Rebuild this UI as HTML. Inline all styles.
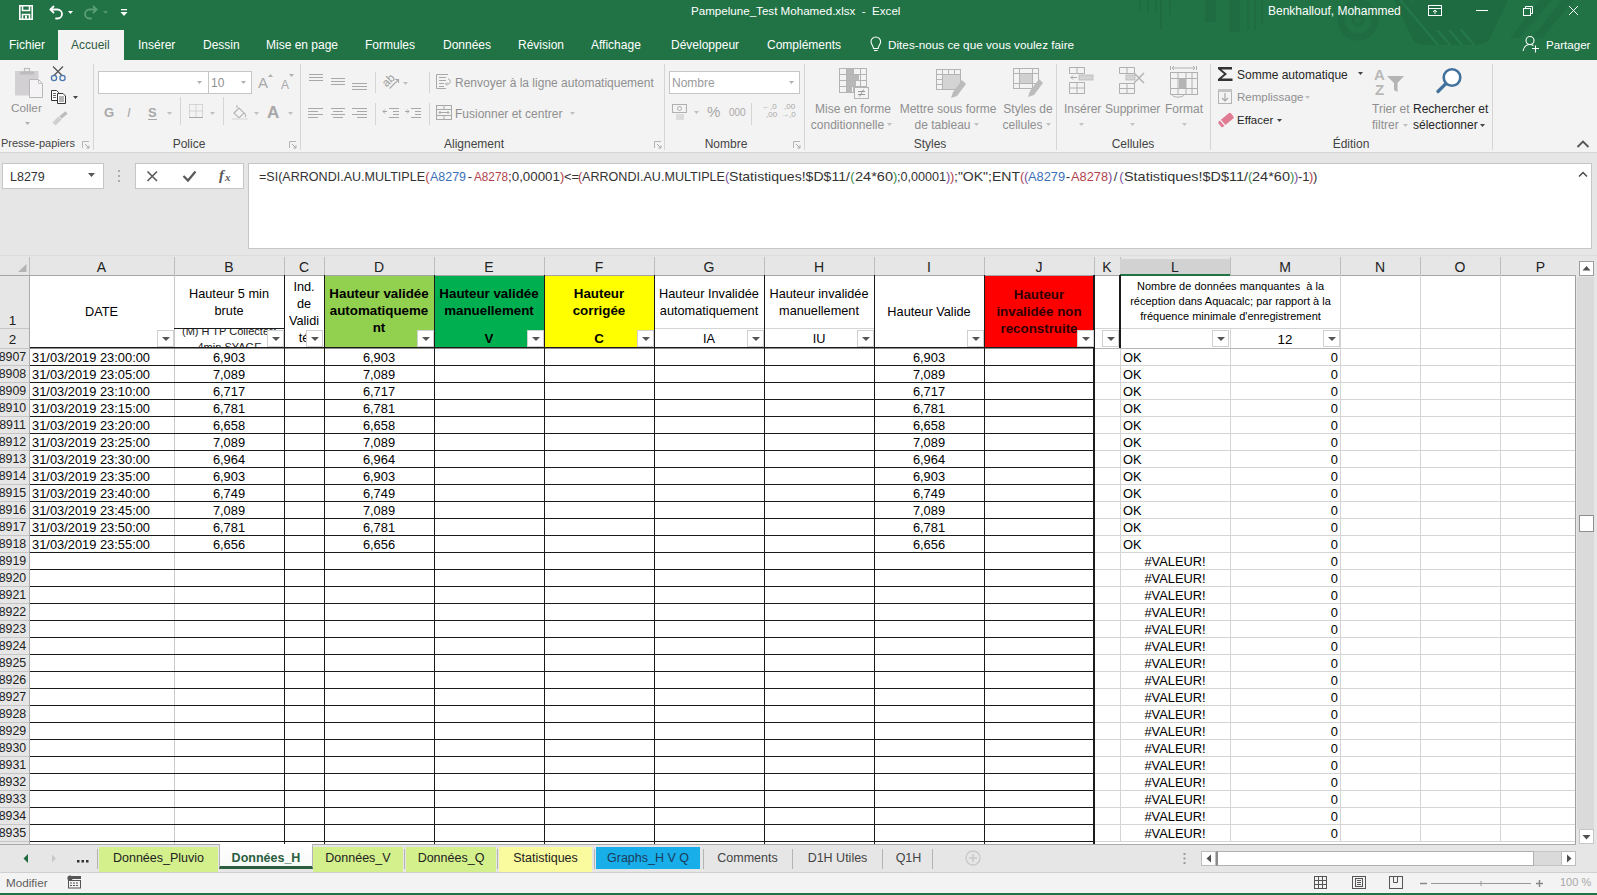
<!DOCTYPE html><html><head><meta charset="utf-8"><style>
*{margin:0;padding:0;box-sizing:border-box}
html,body{width:1597px;height:895px;overflow:hidden;background:#e6e6e6;font-family:"Liberation Sans",sans-serif;}
.ab{position:absolute;white-space:nowrap}
.t{position:absolute;white-space:nowrap;line-height:1}
</style></head><body>
<div class="ab" style="left:0;top:0;width:1597px;height:60px;background:#217346"></div>
<div class="ab" style="left:58px;top:30px;width:66px;height:31px;background:#f3f3f3"></div>
<div class="ab" style="left:0;top:60px;width:1597px;height:92px;background:#f3f3f3"></div>
<div class="ab" style="left:0;top:153px;width:1597px;height:103px;background:#e6e6e6"></div>
<svg class="ab" style="left:1100px;top:0" width="497" height="60">
<g fill="#1f6c42">
<rect x="39" y="0" width="2" height="10"/>
<rect x="47" y="0" width="2" height="14"/>
<rect x="55" y="0" width="2" height="12"/>
<rect x="60" y="0" width="2" height="30"/>
<rect x="69" y="0" width="2" height="15"/>
<rect x="105" y="0" width="11" height="22"/>
<rect x="129" y="0" width="11" height="32"/>
<rect x="147" y="0" width="2" height="30"/>
<rect x="154" y="0" width="2" height="30"/>
<rect x="161" y="0" width="2" height="24"/>
</g>
<circle cx="258" cy="20" r="17" fill="none" stroke="#1f6c42" stroke-width="7"/>
<circle cx="258" cy="20" r="5" fill="none" stroke="#1f6c42" stroke-width="3"/>
<path d="M294 0 L408 0 L390 38 Q386 45 376 45 L326 45 Q316 45 312 38 Z" fill="#1e6b41"/>
<path d="M300 0 L338 45 M312 0 L350 45 M324 0 L362 45 M336 0 L374 45" stroke="#23774a" stroke-width="2.5"/>
<path d="M312 0 L372 0 L360 30 L330 30 Z" fill="#1e6b41"/>
<path d="M440 0 L452 0 L420 38 L410 38 Z M462 0 L474 0 L442 38 L432 38 Z" fill="#1f6c42"/>
</svg>
<svg class="ab" style="left:18px;top:4px" width="112" height="18">
<g fill="none" stroke="#fff" stroke-width="1.6">
<path d="M1.8 1.8 H14.2 V15.2 H1.8 Z"/>
<path d="M4.5 2 V6.5 H11.5 V2"/>
<path d="M4.5 15 V10.5 H11.5 V15"/>
</g>
<rect x="7" y="11.5" width="2" height="3" fill="#fff"/>
<g fill="none" stroke="#fff" stroke-width="1.8" stroke-linecap="round">
<path d="M33 5.5 H39.5 A4.5 4.5 0 0 1 39.5 14.5 H38"/>
<path d="M35.5 2.5 L32.5 5.5 L35.5 8.5"/>
</g>
<path d="M50 7 L55 7 L52.5 10 Z" fill="#fff"/>
<g fill="none" stroke="#5a9f78" stroke-width="1.8" stroke-linecap="round">
<path d="M78 5.5 H71.5 A4.5 4.5 0 0 0 71.5 14.5 H73"/>
<path d="M75.5 2.5 L78.5 5.5 L75.5 8.5"/>
</g>
<path d="M85 7 L90 7 L87.5 10 Z" fill="#4f9470"/>
<rect x="103" y="5" width="6" height="1.3" fill="#fff"/>
<path d="M102.5 8 L109.5 8 L106 12 Z" fill="#fff"/>
</svg>
<svg class="ab" style="left:1420px;top:0" width="177" height="24">
<g fill="none" stroke="#fff" stroke-width="1">
<rect x="8.5" y="5.5" width="13" height="10"/>
<path d="M8.5 8.5 H21.5"/>
<path d="M15 14 V10 M13 12 L15 10 L17 12"/>
<path d="M56 10.5 H68"/>
<rect x="103.5" y="8.5" width="7" height="7"/>
<path d="M105.5 8.5 V6.5 H112.5 V13.5 H110.5"/>
<path d="M149 6 L158 15 M158 6 L149 15"/>
</g>
</svg>
<svg class="ab" style="left:1522px;top:35px" width="18" height="18">
<g fill="none" stroke="#fff" stroke-width="1.1">
<circle cx="8" cy="5.5" r="4"/>
<path d="M1 16 C2 11 5 9.5 8 9.5 C9.5 9.5 10.5 10 11.5 10.5"/>
<path d="M13.5 10.5 V17.5 M10 13.5 H17"/>
</g>
</svg>
<svg class="ab" style="left:869px;top:36px" width="14" height="18">
<g fill="none" stroke="#fff" stroke-width="1.1">
<path d="M4.5 12.5 C4.5 10 2 8.5 2 5.8 A4.8 4.8 0 0 1 11.6 5.8 C11.6 8.5 9.1 10 9.1 12.5 Z"/>
<path d="M5 14.5 H8.6"/>
</g>
</svg>
<div class="t" style="left:691px;top:5px;font-size:11.6px;color:#fff;">Pampelune_Test Mohamed.xlsx&nbsp; -&nbsp; Excel</div>
<div class="t" style="left:1268px;top:5px;font-size:12px;color:#fff;">Benkhallouf, Mohammed</div>
<div class="t" style="left:9px;top:39px;font-size:12px;color:#fff;">Fichier</div>
<div class="t" style="left:138px;top:39px;font-size:12px;color:#fff;">Insérer</div>
<div class="t" style="left:203px;top:39px;font-size:12px;color:#fff;">Dessin</div>
<div class="t" style="left:266px;top:39px;font-size:12px;color:#fff;">Mise en page</div>
<div class="t" style="left:365px;top:39px;font-size:12px;color:#fff;">Formules</div>
<div class="t" style="left:443px;top:39px;font-size:12px;color:#fff;">Données</div>
<div class="t" style="left:518px;top:39px;font-size:12px;color:#fff;">Révision</div>
<div class="t" style="left:591px;top:39px;font-size:12px;color:#fff;">Affichage</div>
<div class="t" style="left:671px;top:39px;font-size:12px;color:#fff;">Développeur</div>
<div class="t" style="left:767px;top:39px;font-size:12px;color:#fff;">Compléments</div>
<div class="t" style="left:1546px;top:39px;font-size:11.6px;color:#fff;">Partager</div>
<div class="t" style="left:888px;top:39px;font-size:11.75px;color:#fff;">Dites-nous ce que vous voulez faire</div>
<div class="t" style="left:71px;top:39px;font-size:12px;color:#2d5a41;">Accueil</div>
<div class="ab" style="left:93px;top:64px;width:1px;height:86px;background:#d5d5d5"></div>
<div class="ab" style="left:300px;top:64px;width:1px;height:86px;background:#d5d5d5"></div>
<div class="ab" style="left:664px;top:64px;width:1px;height:86px;background:#d5d5d5"></div>
<div class="ab" style="left:804px;top:64px;width:1px;height:86px;background:#d5d5d5"></div>
<div class="ab" style="left:1056px;top:64px;width:1px;height:86px;background:#d5d5d5"></div>
<div class="ab" style="left:1210px;top:64px;width:1px;height:86px;background:#d5d5d5"></div>
<div class="ab" style="left:1492px;top:64px;width:1px;height:86px;background:#d5d5d5"></div>
<svg class="ab" style="left:10px;top:64px" width="80" height="70">
<rect x="5" y="7" width="23.5" height="24.5" fill="#d3d0d3"/>
<rect x="10" y="7.5" width="14" height="3" fill="#bdbbbd"/>
<rect x="14.5" y="4.5" width="5" height="3.5" fill="none" stroke="#bdbbbd" stroke-width="1.2"/>
<path d="M19.5 15.5 H28.5 L32.5 19.5 V33.5 H19.5 Z" fill="#f6f3f6" stroke="#b8b8b8"/>
<path d="M28.5 15.5 V19.5 H32.5" fill="none" stroke="#c4c4c4"/>
<g fill="none" stroke="#555" stroke-width="1.3"><path d="M43 2.5 L52.5 12 M53 2.5 L43.5 12"/></g>
<g fill="none" stroke="#4a78ae" stroke-width="1.3"><circle cx="44" cy="14" r="2.6"/><circle cx="52.5" cy="14" r="2.6"/></g>
<g fill="#fff" stroke="#333" stroke-width="1"><path d="M41.5 36.5 V26.5 H46.5 L48.5 28.5 V36.5 Z"/><path d="M47.5 39.5 V29.5 H53 L55.5 32 V39.5 Z"/></g>
<path d="M43 29.5 H46 M43 31.5 H46 M43 33.5 H46 M49 33 H54 M49 35 H54 M49 37 H54" stroke="#444" stroke-width="0.8"/>
<path d="M63 32 L68 32 L65.5 35 Z" fill="#444"/>
<path d="M44 60 L50 54" stroke="#cfcfcf" stroke-width="4.5"/>
<path d="M50.5 53.5 L56.5 48.5" stroke="#bdbdbd" stroke-width="3.5"/>
</svg>
<div class="t" style="left:11px;top:103px;font-size:11.8px;color:#8f8f8f;">Coller</div>
<svg class="ab" style="left:25px;top:122px" width="6" height="4"><path d="M0 0 L5 0 L2.5 3 Z" fill="#b0b0b0"/></svg>
<div class="t" style="left:1px;top:138px;font-size:11px;color:#444444;">Presse-papiers</div>
<svg class="ab" style="left:82px;top:141px" width="8" height="8"><path d="M0.5 7 V0.5 H7" fill="none" stroke="#b4b4b4"/><path d="M3 3 L7 7 M7 4.5 V7 H4.5" fill="none" stroke="#a8a8a8"/></svg>
<div class="ab" style="left:98px;top:71px;width:154px;height:23px;background:#fff;border:1px solid #c6c6c6"></div>
<div class="ab" style="left:208px;top:72px;width:1px;height:21px;background:#c6c6c6"></div>
<svg class="ab" style="left:197px;top:81px" width="6" height="4"><path d="M0 0 L5 0 L2.5 3 Z" fill="#b0b0b0"/></svg>
<svg class="ab" style="left:241px;top:81px" width="6" height="4"><path d="M0 0 L5 0 L2.5 3 Z" fill="#b0b0b0"/></svg>
<div class="t" style="left:211px;top:77px;font-size:12px;color:#8f8f8f;">10</div>
<div class="t" style="left:258px;top:75px;font-size:15px;color:#a8a8a8;">A</div>
<svg class="ab" style="left:268px;top:74px" width="6" height="4"><path d="M0 3 L5 3 L2.5 0 Z" fill="#b0b0b0"/></svg>
<div class="t" style="left:281px;top:79px;font-size:12px;color:#a8a8a8;">A</div>
<svg class="ab" style="left:289px;top:74px" width="6" height="4"><path d="M0 0 L5 0 L2.5 3 Z" fill="#b0b0b0"/></svg>
<div class="t" style="left:104px;top:106px;font-size:13px;color:#a8a8a8;font-weight:bold">G</div>
<div class="t" style="left:127px;top:106px;font-size:13px;color:#a8a8a8;font-style:italic;font-family:"Liberation Serif",serif;font-weight:bold">I</div>
<div class="t" style="left:148px;top:106px;font-size:13px;color:#a8a8a8;font-weight:bold">S</div>
<div class="ab" style="left:148px;top:119px;width:9px;height:1px;background:#a8a8a8"></div>
<svg class="ab" style="left:167px;top:112px" width="6" height="4"><path d="M0 0 L5 0 L2.5 3 Z" fill="#c0c0c0"/></svg>
<svg class="ab" style="left:210px;top:112px" width="6" height="4"><path d="M0 0 L5 0 L2.5 3 Z" fill="#c0c0c0"/></svg>
<svg class="ab" style="left:254px;top:112px" width="6" height="4"><path d="M0 0 L5 0 L2.5 3 Z" fill="#c0c0c0"/></svg>
<svg class="ab" style="left:288px;top:112px" width="6" height="4"><path d="M0 0 L5 0 L2.5 3 Z" fill="#c0c0c0"/></svg>
<div class="ab" style="left:180px;top:97px;width:1px;height:28px;background:#d5d5d5"></div>
<div class="ab" style="left:223px;top:97px;width:1px;height:28px;background:#d5d5d5"></div>
<svg class="ab" style="left:188px;top:103px" width="16" height="16"><g fill="none" stroke="#b8b8b8" stroke-width="1" stroke-dasharray="1 1"><rect x="1.5" y="1.5" width="13" height="13"/><path d="M8 1.5 V14.5 M1.5 8 H14.5"/></g><path d="M1 14.5 H15" stroke="#a8a8a8"/></svg>
<svg class="ab" style="left:231px;top:104px" width="18" height="16"><g fill="none" stroke="#b4b4b4" stroke-width="1.1"><path d="M3 9 L8 4 L13 9 L8 14 Z"/><path d="M6 4 V1"/><path d="M13 9 C15 10 15 12 14 13"/></g><rect x="1" y="14" width="16" height="2" fill="#e4e4e4"/></svg>
<div class="t" style="left:267px;top:104px;font-size:17px;color:#a8a8a8;font-weight:bold">A</div>
<div class="t" style="left:89px;top:138px;width:200px;text-align:center;font-size:12px;color:#444444">Police</div>
<svg class="ab" style="left:289px;top:141px" width="8" height="8"><path d="M0.5 7 V0.5 H7" fill="none" stroke="#b4b4b4"/><path d="M3 3 L7 7 M7 4.5 V7 H4.5" fill="none" stroke="#a8a8a8"/></svg>
<svg class="ab" style="left:300px;top:60px" width="370" height="70"><rect x="9" y="14" width="14" height="1" fill="#a8a8a8"/><rect x="9" y="17" width="14" height="1" fill="#a8a8a8"/><rect x="9" y="20" width="14" height="1" fill="#a8a8a8"/><rect x="31" y="18" width="14" height="1" fill="#a8a8a8"/><rect x="31" y="21" width="14" height="1" fill="#a8a8a8"/><rect x="31" y="24" width="14" height="1" fill="#a8a8a8"/><rect x="52" y="23" width="15" height="1" fill="#a8a8a8"/><rect x="52" y="26" width="15" height="1" fill="#a8a8a8"/><rect x="52" y="29" width="15" height="1" fill="#a8a8a8"/><rect x="8" y="48" width="15" height="1" fill="#a8a8a8"/><rect x="8" y="51" width="10" height="1" fill="#a8a8a8"/><rect x="8" y="54" width="15" height="1" fill="#a8a8a8"/><rect x="8" y="57" width="10" height="1" fill="#a8a8a8"/><rect x="31" y="48" width="14" height="1" fill="#a8a8a8"/><rect x="33" y="51" width="10" height="1" fill="#a8a8a8"/><rect x="31" y="54" width="14" height="1" fill="#a8a8a8"/><rect x="33" y="57" width="10" height="1" fill="#a8a8a8"/><rect x="52" y="48" width="15" height="1" fill="#a8a8a8"/><rect x="57" y="51" width="10" height="1" fill="#a8a8a8"/><rect x="52" y="54" width="15" height="1" fill="#a8a8a8"/><rect x="57" y="57" width="10" height="1" fill="#a8a8a8"/><rect x="89" y="48" width="10" height="1" fill="#a8a8a8"/><rect x="93" y="51" width="6" height="1" fill="#a8a8a8"/><rect x="93" y="54" width="6" height="1" fill="#a8a8a8"/><rect x="89" y="57" width="10" height="1" fill="#a8a8a8"/><path d="M83 51.5 L87 51.5 M83 51.5 L85 49.5 M83 51.5 L85 53.5" stroke="#a8a8a8" fill="none"/><rect x="111" y="48" width="10" height="1" fill="#a8a8a8"/><rect x="115" y="51" width="6" height="1" fill="#a8a8a8"/><rect x="115" y="54" width="6" height="1" fill="#a8a8a8"/><rect x="111" y="57" width="10" height="1" fill="#a8a8a8"/><path d="M105 51.5 L109 51.5 M109 51.5 L107 49.5 M109 51.5 L107 53.5" stroke="#a8a8a8" fill="none"/><text x="86.5" y="27.5" font-size="11.5" fill="#9a9a9a" transform="rotate(-45 86.5 27.5)" font-family="Liberation Sans">ab</text><path d="M89.5 28.5 L98 20 M95 19.5 H98.5 V23" stroke="#a8a8a8" stroke-width="1.1" fill="none"/><path d="M103 22 L108 22 L105.5 25 Z" fill="#c0c0c0"/><g fill="none" stroke="#a8a8a8"><path d="M136.5 14.5 H148 M136.5 14.5 V28.5 H146"/><path d="M139 17.5 H146 M139 20.5 H146 M139 23.5 H144 M139 26.5 H144"/><path d="M148 19 C151 19 151 24 148 24 H146 M147 22.5 L145.5 24 L147 25.5"/></g><g fill="none" stroke="#a8a8a8"><rect x="136.5" y="45.5" width="15" height="14"/><path d="M136.5 49.5 H151.5 M136.5 55.5 H151.5 M144 45.5 V49.5 M144 55.5 V59.5 M139 52.5 H149 M139 52.5 L140.5 51 M139 52.5 L140.5 54 M149 52.5 L147.5 51 M149 52.5 L147.5 54"/></g><path d="M270 52 L275 52 L272.5 55 Z" fill="#c0c0c0"/></svg>
<div class="ab" style="left:375px;top:72px;width:1px;height:21px;background:#d5d5d5"></div>
<div class="ab" style="left:375px;top:103px;width:1px;height:22px;background:#d5d5d5"></div>
<div class="ab" style="left:429px;top:72px;width:1px;height:21px;background:#d5d5d5"></div>
<div class="ab" style="left:429px;top:103px;width:1px;height:22px;background:#d5d5d5"></div>
<div class="t" style="left:455px;top:77px;font-size:12px;color:#8f8f8f;">Renvoyer à la ligne automatiquement</div>
<div class="t" style="left:455px;top:108px;font-size:12px;color:#8f8f8f;">Fusionner et centrer</div>
<div class="t" style="left:374px;top:138px;width:200px;text-align:center;font-size:12px;color:#444444">Alignement</div>
<svg class="ab" style="left:654px;top:141px" width="8" height="8"><path d="M0.5 7 V0.5 H7" fill="none" stroke="#b4b4b4"/><path d="M3 3 L7 7 M7 4.5 V7 H4.5" fill="none" stroke="#a8a8a8"/></svg>
<div class="ab" style="left:669px;top:71px;width:131px;height:23px;background:#fff;border:1px solid #c6c6c6"></div>
<div class="t" style="left:672px;top:77px;font-size:12px;color:#9a9a9a;">Nombre</div>
<svg class="ab" style="left:789px;top:81px" width="6" height="4"><path d="M0 0 L5 0 L2.5 3 Z" fill="#b0b0b0"/></svg>
<svg class="ab" style="left:670px;top:102px" width="135" height="22">
<g fill="none" stroke="#b0b0b0"><rect x="2.5" y="2.5" width="14" height="8"/><circle cx="9.5" cy="6.5" r="2"/></g>
<rect x="6" y="12" width="8" height="6" fill="#dcdcdc"/>
<path d="M24 9 L29 9 L26.5 12 Z" fill="#c0c0c0"/>
</svg>
<div class="t" style="left:707px;top:104px;font-size:15px;color:#a8a8a8;">%</div>
<div class="t" style="left:729px;top:108px;font-size:10px;color:#a8a8a8;">000</div>
<div class="ab" style="left:751px;top:103px;width:1px;height:22px;background:#d5d5d5"></div>
<div class="t" style="left:762px;top:103px;font-size:8px;color:#a8a8a8;">←,0</div>
<div class="t" style="left:766px;top:111px;font-size:8px;color:#a8a8a8;">,00</div>
<div class="t" style="left:784px;top:103px;font-size:8px;color:#a8a8a8;">,00</div>
<div class="t" style="left:781px;top:111px;font-size:8px;color:#a8a8a8;">→,0</div>
<div class="t" style="left:626px;top:138px;width:200px;text-align:center;font-size:12px;color:#444444">Nombre</div>
<svg class="ab" style="left:793px;top:141px" width="8" height="8"><path d="M0.5 7 V0.5 H7" fill="none" stroke="#b4b4b4"/><path d="M3 3 L7 7 M7 4.5 V7 H4.5" fill="none" stroke="#a8a8a8"/></svg>
<svg class="ab" style="left:836px;top:64px" width="215" height="40">
<g fill="none" stroke="#b4b4b4"><rect x="3.5" y="4.5" width="27" height="24"/><path d="M3.5 10.5 H30.5 M3.5 16.5 H30.5 M3.5 22.5 H30.5 M10.5 4.5 V28.5 M17.5 4.5 V28.5 M24.5 4.5 V28.5"/></g>
<rect x="11" y="5" width="6" height="5" fill="#b8b8b8"/><rect x="11" y="11" width="12" height="5" fill="#b8b8b8"/><rect x="11" y="17" width="9" height="5" fill="#b8b8b8"/><rect x="11" y="23" width="5" height="5" fill="#b8b8b8"/>
<rect x="18.5" y="23.5" width="14" height="11" fill="#f3f3f3" stroke="#b4b4b4"/>
<path d="M22 27.5 H29 M22 30.5 H29 M27.5 25.5 L23.5 32.5" stroke="#999" fill="none"/>
<g fill="none" stroke="#b4b4b4"><rect x="100.5" y="5.5" width="24" height="20"/><path d="M100.5 10.5 H124.5 M100.5 15.5 H124.5 M100.5 20.5 H124.5 M106.5 5.5 V25.5 M112.5 5.5 V25.5 M118.5 5.5 V25.5"/></g>
<rect x="107" y="11" width="17" height="14" fill="#d4d4d4"/>
<path d="M130 20 L121 32 L115 34 L117 28 L126 16 Z" fill="#bcbcbc"/>
<g fill="none" stroke="#b4b4b4"><rect x="177.5" y="4.5" width="25" height="20"/><path d="M177.5 9.5 H202.5 M177.5 19.5 H202.5 M183.5 4.5 V24.5 M196.5 4.5 V24.5"/></g>
<rect x="184" y="10" width="12" height="9" fill="#d0d0d0"/>
<path d="M207 19 L198 31 L192 33 L194 27 L203 15 Z" fill="#bcbcbc"/>
</svg>
<div class="t" style="left:793px;top:103px;width:120px;text-align:center;font-size:12px;color:#8f8f8f">Mise en forme</div>
<div class="t" style="left:793px;top:119px;width:120px;text-align:center;font-size:12px;color:#8f8f8f">conditionnelle<svg width="8" height="4" style="margin-left:3px;vertical-align:2px"><path d="M0 0 L5 0 L2.5 3 Z" fill="#c0c0c0"/></svg></div>
<div class="t" style="left:888px;top:103px;width:120px;text-align:center;font-size:12px;color:#8f8f8f">Mettre sous forme</div>
<div class="t" style="left:888px;top:119px;width:120px;text-align:center;font-size:12px;color:#8f8f8f">de tableau<svg width="8" height="4" style="margin-left:3px;vertical-align:2px"><path d="M0 0 L5 0 L2.5 3 Z" fill="#c0c0c0"/></svg></div>
<div class="t" style="left:968px;top:103px;width:120px;text-align:center;font-size:12px;color:#8f8f8f">Styles de</div>
<div class="t" style="left:968px;top:119px;width:120px;text-align:center;font-size:12px;color:#8f8f8f">cellules<svg width="8" height="4" style="margin-left:3px;vertical-align:2px"><path d="M0 0 L5 0 L2.5 3 Z" fill="#c0c0c0"/></svg></div>
<div class="t" style="left:830px;top:138px;width:200px;text-align:center;font-size:12px;color:#444444">Styles</div>
<svg class="ab" style="left:1063px;top:64px" width="145" height="36">
<g fill="none" stroke="#b0b0b0">
<path d="M6.5 3.5 H21.5 V9.5 H6.5 Z M14 3.5 V9.5"/>
<path d="M6.5 18.5 H21.5 V29.5 H6.5 Z M14 18.5 V29.5 M6.5 24 H21.5"/>
<path d="M56.5 3.5 H71.5 V9.5 H56.5 Z M64 3.5 V9.5"/>
<path d="M56.5 19.5 H71.5 V29.5 H56.5 Z M64 19.5 V29.5 M56.5 24.5 H71.5"/>
<rect x="107.5" y="8.5" width="27" height="22"/>
<path d="M107.5 14.5 H134.5 M107.5 24.5 H134.5 M115 8.5 V30.5 M123 8.5 V30.5 M129 8.5 V30.5"/>
<path d="M107.5 2 V6 M133.5 2 V6 M109 4 H132 M111 2 L109 4 L111 6 M130 2 L132 4 L130 6"/>
<path d="M109 30.5 C109 34 121 34 121 30.5"/>
</g>
<rect x="16" y="11" width="14" height="5" fill="#d4d4d4" stroke="#b8b8b8" stroke-width="0.8"/>
<path d="M8 13.5 H14 M8 13.5 L10 11.5 M8 13.5 L10 15.5" stroke="#a8a8a8" fill="none"/>
<rect x="63" y="11" width="9" height="5" fill="#d4d4d4" stroke="#b8b8b8" stroke-width="0.8"/>
<path d="M71 9 L81 19 M81 9 L71 19" stroke="#b4b4b4" stroke-width="1.5"/>
<rect x="116" y="15" width="7" height="9" fill="#b4b4b4"/>
</svg>
<div class="t" style="left:1064px;top:103px;font-size:12px;color:#8f8f8f;">Insérer</div>
<div class="t" style="left:1105px;top:103px;font-size:12px;color:#8f8f8f;">Supprimer</div>
<div class="t" style="left:1165px;top:103px;font-size:12px;color:#8f8f8f;">Format</div>
<svg class="ab" style="left:1079px;top:123px" width="6" height="4"><path d="M0 0 L5 0 L2.5 3 Z" fill="#c4c4c4"/></svg>
<svg class="ab" style="left:1130px;top:123px" width="6" height="4"><path d="M0 0 L5 0 L2.5 3 Z" fill="#c4c4c4"/></svg>
<svg class="ab" style="left:1182px;top:123px" width="6" height="4"><path d="M0 0 L5 0 L2.5 3 Z" fill="#c4c4c4"/></svg>
<div class="t" style="left:1033px;top:138px;width:200px;text-align:center;font-size:12px;color:#444444">Cellules</div>
<svg class="ab" style="left:1217px;top:66px" width="17" height="16"><path d="M1 1 H15 V3.5 H4.5 L10 8 L4.5 12.5 H15.5 V15 H1 V13 L7 8 L1 3 Z" fill="#333"/></svg>
<div class="t" style="left:1237px;top:69px;font-size:12px;color:#262626;">Somme automatique</div>
<svg class="ab" style="left:1358px;top:72px" width="6" height="4"><path d="M0 0 L5 0 L2.5 3 Z" fill="#444"/></svg>
<svg class="ab" style="left:1217px;top:88px" width="18" height="40">
<rect x="1.5" y="1.5" width="13" height="14" fill="none" stroke="#b4b4b4"/><rect x="1" y="1" width="14" height="3" fill="#c4c4c4"/>
<path d="M8 5 V13 M5 10 L8 13 L11 10" fill="none" stroke="#a8a8a8" stroke-width="1.2"/>
<g transform="rotate(-40 9 32)"><rect x="1" y="28.5" width="16" height="7" rx="1.5" fill="#e07b93"/><rect x="4" y="28.5" width="1.3" height="7" fill="#f4f4f4"/></g>
</svg>
<div class="t" style="left:1237px;top:92px;font-size:11.5px;color:#8f8f8f;">Remplissage</div>
<svg class="ab" style="left:1305px;top:96px" width="6" height="4"><path d="M0 0 L5 0 L2.5 3 Z" fill="#c0c0c0"/></svg>
<div class="t" style="left:1237px;top:115px;font-size:11.5px;color:#262626;">Effacer</div>
<svg class="ab" style="left:1277px;top:119px" width="6" height="4"><path d="M0 0 L5 0 L2.5 3 Z" fill="#444"/></svg>
<svg class="ab" style="left:1373px;top:66px" width="100" height="32">
<text x="1" y="13.5" font-size="15" font-weight="bold" fill="#b8b8b8" font-family="Liberation Sans">A</text>
<text x="2" y="28.5" font-size="15" font-weight="bold" fill="#b8b8b8" font-family="Liberation Sans">Z</text>
<path d="M14 10 H31 L24.5 17 V26 L21 24 V17 Z" fill="#b4b4b4"/>
<circle cx="79" cy="11.5" r="8.3" fill="#fff" stroke="#41719c" stroke-width="2.6"/>
<path d="M72.5 18 L65 25.5" stroke="#41719c" stroke-width="3.2" stroke-linecap="round"/>
</svg>
<div class="t" style="left:1372px;top:103px;font-size:12px;color:#8f8f8f;">Trier et</div>
<div class="t" style="left:1372px;top:119px;font-size:12px;color:#8f8f8f;">filtrer</div>
<svg class="ab" style="left:1403px;top:124px" width="6" height="4"><path d="M0 0 L5 0 L2.5 3 Z" fill="#c0c0c0"/></svg>
<div class="t" style="left:1413px;top:103px;font-size:12px;color:#262626;">Rechercher et</div>
<div class="t" style="left:1413px;top:119px;font-size:12px;color:#262626;">sélectionner</div>
<svg class="ab" style="left:1480px;top:124px" width="6" height="4"><path d="M0 0 L5 0 L2.5 3 Z" fill="#444"/></svg>
<div class="t" style="left:1251px;top:138px;width:200px;text-align:center;font-size:12px;color:#444444">Édition</div>
<svg class="ab" style="left:1576px;top:139px" width="15" height="10"><path d="M1.5 8 L7 2.5 L12.5 8" fill="none" stroke="#555" stroke-width="1.8"/></svg>
<div class="ab" style="left:0;top:152px;width:1597px;height:1px;background:#d5d5d5"></div>
<div class="ab" style="left:2px;top:163px;width:102px;height:26px;background:#fff;border:1px solid #c6c6c6"></div>
<div class="t" style="left:10px;top:171px;font-size:12.5px;color:#333;">L8279</div>
<svg class="ab" style="left:88px;top:173px" width="8" height="5"><path d="M0 0 L7 0 L3.5 4 Z" fill="#555"/></svg>
<svg class="ab" style="left:117px;top:169px" width="4" height="14"><circle cx="2" cy="2" r="1" fill="#9a9a9a"/><circle cx="2" cy="7" r="1" fill="#9a9a9a"/><circle cx="2" cy="12" r="1" fill="#9a9a9a"/></svg>
<div class="ab" style="left:135px;top:163px;width:109px;height:26px;background:#fff;border:1px solid #c6c6c6"></div>
<svg class="ab" style="left:140px;top:166px" width="100" height="20">
<path d="M7.5 5.5 L17 15 M17 5.5 L7.5 15" stroke="#595959" stroke-width="1.6"/>
<path d="M43.5 10 L48 14.5 L55.5 5.5" fill="none" stroke="#595959" stroke-width="2.2"/>
</svg>
<svg class="ab" style="left:217px;top:167px" width="20" height="18"><text x="2" y="13" font-size="15" font-style="italic" font-weight="bold" fill="#595959" font-family="Liberation Serif">f</text><text x="8" y="14" font-size="11" font-style="italic" font-weight="bold" fill="#595959" font-family="Liberation Serif">x</text></svg>
<div class="ab" style="left:248px;top:163px;width:1344px;height:86px;background:#fff;border:1px solid #c6c6c6"></div>
<div class="t" style="left:259px;top:170px;font-size:13px;color:#333;transform:scaleX(0.965);transform-origin:0 0">=SI(ARRONDI.AU.MULTIPLE</div>
<div class="t" style="left:425px;top:170px;width:5px;text-align:center;font-size:13px;color:#b1434c">(</div>
<div class="t" style="left:430px;top:170px;font-size:13px;color:#3b6fb6;transform:scaleX(0.957);transform-origin:0 0">A8279</div>
<div class="t" style="left:466px;top:170px;width:8px;text-align:center;font-size:13px;color:#333">-</div>
<div class="t" style="left:474px;top:170px;font-size:13px;color:#b1434c;transform:scaleX(0.904);transform-origin:0 0">A8278</div>
<div class="t" style="left:508px;top:170px;font-size:13px;color:#333;transform:scaleX(1.027);transform-origin:0 0">;0,00001</div>
<div class="t" style="left:560px;top:170px;width:4px;text-align:center;font-size:13px;color:#b1434c">)</div>
<div class="t" style="left:564px;top:170px;width:14px;text-align:center;font-size:13px;color:#333">&lt;=</div>
<div class="t" style="left:578px;top:170px;width:4px;text-align:center;font-size:13px;color:#b1434c">(</div>
<div class="t" style="left:582px;top:170px;font-size:13px;color:#333;transform:scaleX(0.967);transform-origin:0 0">ARRONDI.AU.MULTIPLE</div>
<div class="t" style="left:725px;top:170px;width:4px;text-align:center;font-size:13px;color:#7a4f9a">(</div>
<div class="t" style="left:729px;top:170px;font-size:13px;color:#333;transform:scaleX(1.082);transform-origin:0 0">Statistiques!$D$11/</div>
<div class="t" style="left:850px;top:170px;width:5px;text-align:center;font-size:13px;color:#3a8a4a">(</div>
<div class="t" style="left:855px;top:170px;font-size:13px;color:#333;transform:scaleX(1.118);transform-origin:0 0">24*60</div>
<div class="t" style="left:893px;top:170px;width:4px;text-align:center;font-size:13px;color:#3a8a4a">)</div>
<div class="t" style="left:897px;top:170px;font-size:13px;color:#333;transform:scaleX(0.968);transform-origin:0 0">;0,00001</div>
<div class="t" style="left:946px;top:170px;width:4px;text-align:center;font-size:13px;color:#7a4f9a">)</div>
<div class="t" style="left:950px;top:170px;width:4px;text-align:center;font-size:13px;color:#b1434c">)</div>
<div class="t" style="left:954px;top:170px;font-size:13px;color:#333;transform:scaleX(1.078);transform-origin:0 0">;&quot;OK&quot;;ENT</div>
<div class="t" style="left:1020px;top:170px;width:4px;text-align:center;font-size:13px;color:#b1434c">(</div>
<div class="t" style="left:1024px;top:170px;width:4px;text-align:center;font-size:13px;color:#7a4f9a">(</div>
<div class="t" style="left:1028px;top:170px;font-size:13px;color:#3b6fb6;transform:scaleX(0.984);transform-origin:0 0">A8279</div>
<div class="t" style="left:1065px;top:170px;width:6px;text-align:center;font-size:13px;color:#333">-</div>
<div class="t" style="left:1071px;top:170px;font-size:13px;color:#b1434c;transform:scaleX(0.984);transform-origin:0 0">A8278</div>
<div class="t" style="left:1108px;top:170px;width:4px;text-align:center;font-size:13px;color:#7a4f9a">)</div>
<div class="t" style="left:1112px;top:170px;width:7px;text-align:center;font-size:13px;color:#333">/</div>
<div class="t" style="left:1119px;top:170px;width:5px;text-align:center;font-size:13px;color:#7a4f9a">(</div>
<div class="t" style="left:1124px;top:170px;font-size:13px;color:#333;transform:scaleX(1.109);transform-origin:0 0">Statistiques!$D$11/</div>
<div class="t" style="left:1248px;top:170px;width:4px;text-align:center;font-size:13px;color:#3a8a4a">(</div>
<div class="t" style="left:1252px;top:170px;font-size:13px;color:#333;transform:scaleX(1.118);transform-origin:0 0">24*60</div>
<div class="t" style="left:1290px;top:170px;width:4px;text-align:center;font-size:13px;color:#3a8a4a">)</div>
<div class="t" style="left:1294px;top:170px;width:4px;text-align:center;font-size:13px;color:#7a4f9a">)</div>
<div class="t" style="left:1298px;top:170px;width:11px;text-align:center;font-size:13px;color:#333">-1</div>
<div class="t" style="left:1309px;top:170px;width:4px;text-align:center;font-size:13px;color:#b1434c">)</div>
<div class="t" style="left:1313px;top:170px;width:3px;text-align:center;font-size:13px;color:#333">)</div>
<svg class="ab" style="left:1578px;top:171px" width="10" height="7"><path d="M1 5.5 L5 1.5 L9 5.5" fill="none" stroke="#444" stroke-width="1.4"/></svg>
<div class="ab" style="left:0;top:256px;width:1577px;height:588px;background:#fff"></div>
<div class="ab" style="left:0;top:256px;width:1577px;height:19px;background:#e6e6e6"></div>
<div class="ab" style="left:0;top:275px;width:29px;height:569px;background:#e6e6e6"></div>
<div class="ab" style="left:29px;top:257px;width:1px;height:18px;background:#bdbdbd"></div>
<div class="t" style="left:29px;top:260px;width:145px;text-align:center;font-size:14px;color:#222">A</div>
<div class="ab" style="left:174px;top:257px;width:1px;height:18px;background:#bdbdbd"></div>
<div class="t" style="left:174px;top:260px;width:110px;text-align:center;font-size:14px;color:#222">B</div>
<div class="ab" style="left:284px;top:257px;width:1px;height:18px;background:#bdbdbd"></div>
<div class="t" style="left:284px;top:260px;width:40px;text-align:center;font-size:14px;color:#222">C</div>
<div class="ab" style="left:324px;top:257px;width:1px;height:18px;background:#bdbdbd"></div>
<div class="t" style="left:324px;top:260px;width:110px;text-align:center;font-size:14px;color:#222">D</div>
<div class="ab" style="left:434px;top:257px;width:1px;height:18px;background:#bdbdbd"></div>
<div class="t" style="left:434px;top:260px;width:110px;text-align:center;font-size:14px;color:#222">E</div>
<div class="ab" style="left:544px;top:257px;width:1px;height:18px;background:#bdbdbd"></div>
<div class="t" style="left:544px;top:260px;width:110px;text-align:center;font-size:14px;color:#222">F</div>
<div class="ab" style="left:654px;top:257px;width:1px;height:18px;background:#bdbdbd"></div>
<div class="t" style="left:654px;top:260px;width:110px;text-align:center;font-size:14px;color:#222">G</div>
<div class="ab" style="left:764px;top:257px;width:1px;height:18px;background:#bdbdbd"></div>
<div class="t" style="left:764px;top:260px;width:110px;text-align:center;font-size:14px;color:#222">H</div>
<div class="ab" style="left:874px;top:257px;width:1px;height:18px;background:#bdbdbd"></div>
<div class="t" style="left:874px;top:260px;width:110px;text-align:center;font-size:14px;color:#222">I</div>
<div class="ab" style="left:984px;top:257px;width:1px;height:18px;background:#bdbdbd"></div>
<div class="t" style="left:984px;top:260px;width:110px;text-align:center;font-size:14px;color:#222">J</div>
<div class="ab" style="left:1094px;top:257px;width:1px;height:18px;background:#bdbdbd"></div>
<div class="t" style="left:1094px;top:260px;width:26px;text-align:center;font-size:14px;color:#222">K</div>
<div class="ab" style="left:1120px;top:257px;width:1px;height:18px;background:#bdbdbd"></div>
<div class="t" style="left:1120px;top:260px;width:110px;text-align:center;font-size:14px;color:#222">L</div>
<div class="ab" style="left:1230px;top:257px;width:1px;height:18px;background:#bdbdbd"></div>
<div class="t" style="left:1230px;top:260px;width:110px;text-align:center;font-size:14px;color:#222">M</div>
<div class="ab" style="left:1340px;top:257px;width:1px;height:18px;background:#bdbdbd"></div>
<div class="t" style="left:1340px;top:260px;width:80px;text-align:center;font-size:14px;color:#222">N</div>
<div class="ab" style="left:1420px;top:257px;width:1px;height:18px;background:#bdbdbd"></div>
<div class="t" style="left:1420px;top:260px;width:80px;text-align:center;font-size:14px;color:#222">O</div>
<div class="ab" style="left:1500px;top:257px;width:1px;height:18px;background:#bdbdbd"></div>
<div class="t" style="left:1500px;top:260px;width:81px;text-align:center;font-size:14px;color:#222">P</div>
<div class="ab" style="left:0;top:275px;width:1576px;height:1px;background:#a5a5a5"></div>
<div class="ab" style="left:0;top:255px;width:1597px;height:1px;background:#dcdcdc"></div>
<div class="ab" style="left:1120px;top:259px;width:110px;height:17px;background:#d2d2d2;border-bottom:2px solid #217346"></div>
<div class="t" style="left:1120px;top:260px;width:110px;text-align:center;font-size:14px;color:#222">L</div>
<svg class="ab" style="left:17px;top:263px" width="11" height="11"><path d="M9.5 1 L9.5 9 L1 9 Z" fill="#b4b4b4"/></svg>
<div class="ab" style="left:1094px;top:365px;width:482px;height:1px;background:#d4d4d4"></div>
<div class="ab" style="left:1094px;top:382px;width:482px;height:1px;background:#d4d4d4"></div>
<div class="ab" style="left:1094px;top:399px;width:482px;height:1px;background:#d4d4d4"></div>
<div class="ab" style="left:1094px;top:416px;width:482px;height:1px;background:#d4d4d4"></div>
<div class="ab" style="left:1094px;top:433px;width:482px;height:1px;background:#d4d4d4"></div>
<div class="ab" style="left:1094px;top:450px;width:482px;height:1px;background:#d4d4d4"></div>
<div class="ab" style="left:1094px;top:467px;width:482px;height:1px;background:#d4d4d4"></div>
<div class="ab" style="left:1094px;top:484px;width:482px;height:1px;background:#d4d4d4"></div>
<div class="ab" style="left:1094px;top:501px;width:482px;height:1px;background:#d4d4d4"></div>
<div class="ab" style="left:1094px;top:518px;width:482px;height:1px;background:#d4d4d4"></div>
<div class="ab" style="left:1094px;top:535px;width:482px;height:1px;background:#d4d4d4"></div>
<div class="ab" style="left:1094px;top:552px;width:482px;height:1px;background:#d4d4d4"></div>
<div class="ab" style="left:1094px;top:569px;width:482px;height:1px;background:#d4d4d4"></div>
<div class="ab" style="left:1094px;top:586px;width:482px;height:1px;background:#d4d4d4"></div>
<div class="ab" style="left:1094px;top:603px;width:482px;height:1px;background:#d4d4d4"></div>
<div class="ab" style="left:1094px;top:620px;width:482px;height:1px;background:#d4d4d4"></div>
<div class="ab" style="left:1094px;top:637px;width:482px;height:1px;background:#d4d4d4"></div>
<div class="ab" style="left:1094px;top:654px;width:482px;height:1px;background:#d4d4d4"></div>
<div class="ab" style="left:1094px;top:671px;width:482px;height:1px;background:#d4d4d4"></div>
<div class="ab" style="left:1094px;top:688px;width:482px;height:1px;background:#d4d4d4"></div>
<div class="ab" style="left:1094px;top:705px;width:482px;height:1px;background:#d4d4d4"></div>
<div class="ab" style="left:1094px;top:722px;width:482px;height:1px;background:#d4d4d4"></div>
<div class="ab" style="left:1094px;top:739px;width:482px;height:1px;background:#d4d4d4"></div>
<div class="ab" style="left:1094px;top:756px;width:482px;height:1px;background:#d4d4d4"></div>
<div class="ab" style="left:1094px;top:773px;width:482px;height:1px;background:#d4d4d4"></div>
<div class="ab" style="left:1094px;top:790px;width:482px;height:1px;background:#d4d4d4"></div>
<div class="ab" style="left:1094px;top:807px;width:482px;height:1px;background:#d4d4d4"></div>
<div class="ab" style="left:1094px;top:824px;width:482px;height:1px;background:#d4d4d4"></div>
<div class="ab" style="left:1094px;top:841px;width:482px;height:1px;background:#d4d4d4"></div>
<div class="ab" style="left:1340px;top:328px;width:236px;height:1px;background:#d4d4d4"></div>
<div class="ab" style="left:1340px;top:348px;width:236px;height:1px;background:#d4d4d4"></div>
<div class="ab" style="left:1230px;top:328px;width:1px;height:513px;background:#d4d4d4"></div>
<div class="ab" style="left:1340px;top:275px;width:1px;height:566px;background:#d4d4d4"></div>
<div class="ab" style="left:1420px;top:275px;width:1px;height:566px;background:#d4d4d4"></div>
<div class="ab" style="left:1500px;top:275px;width:1px;height:566px;background:#d4d4d4"></div>
<div class="ab" style="left:1120px;top:347px;width:1px;height:494px;background:#d4d4d4"></div>
<div class="ab" style="left:174px;top:275px;width:1px;height:569px;background:#c8c8c8"></div>
<div class="ab" style="left:325px;top:276px;width:109px;height:71px;background:#92d050"></div>
<div class="ab" style="left:435px;top:276px;width:109px;height:71px;background:#00b050"></div>
<div class="ab" style="left:545px;top:276px;width:109px;height:71px;background:#ffff00"></div>
<div class="ab" style="left:985px;top:276px;width:109px;height:71px;background:#ff0000"></div>
<div class="ab" style="left:29px;top:365px;width:1066px;height:1px;background:#1b1b1b"></div>
<div class="ab" style="left:29px;top:382px;width:1066px;height:1px;background:#1b1b1b"></div>
<div class="ab" style="left:29px;top:399px;width:1066px;height:1px;background:#1b1b1b"></div>
<div class="ab" style="left:29px;top:416px;width:1066px;height:1px;background:#1b1b1b"></div>
<div class="ab" style="left:29px;top:433px;width:1066px;height:1px;background:#1b1b1b"></div>
<div class="ab" style="left:29px;top:450px;width:1066px;height:1px;background:#1b1b1b"></div>
<div class="ab" style="left:29px;top:467px;width:1066px;height:1px;background:#1b1b1b"></div>
<div class="ab" style="left:29px;top:484px;width:1066px;height:1px;background:#1b1b1b"></div>
<div class="ab" style="left:29px;top:501px;width:1066px;height:1px;background:#1b1b1b"></div>
<div class="ab" style="left:29px;top:518px;width:1066px;height:1px;background:#1b1b1b"></div>
<div class="ab" style="left:29px;top:535px;width:1066px;height:1px;background:#1b1b1b"></div>
<div class="ab" style="left:29px;top:552px;width:1066px;height:1px;background:#1b1b1b"></div>
<div class="ab" style="left:29px;top:569px;width:1066px;height:1px;background:#1b1b1b"></div>
<div class="ab" style="left:29px;top:586px;width:1066px;height:1px;background:#1b1b1b"></div>
<div class="ab" style="left:29px;top:603px;width:1066px;height:1px;background:#1b1b1b"></div>
<div class="ab" style="left:29px;top:620px;width:1066px;height:1px;background:#1b1b1b"></div>
<div class="ab" style="left:29px;top:637px;width:1066px;height:1px;background:#1b1b1b"></div>
<div class="ab" style="left:29px;top:654px;width:1066px;height:1px;background:#1b1b1b"></div>
<div class="ab" style="left:29px;top:671px;width:1066px;height:1px;background:#1b1b1b"></div>
<div class="ab" style="left:29px;top:688px;width:1066px;height:1px;background:#1b1b1b"></div>
<div class="ab" style="left:29px;top:705px;width:1066px;height:1px;background:#1b1b1b"></div>
<div class="ab" style="left:29px;top:722px;width:1066px;height:1px;background:#1b1b1b"></div>
<div class="ab" style="left:29px;top:739px;width:1066px;height:1px;background:#1b1b1b"></div>
<div class="ab" style="left:29px;top:756px;width:1066px;height:1px;background:#1b1b1b"></div>
<div class="ab" style="left:29px;top:773px;width:1066px;height:1px;background:#1b1b1b"></div>
<div class="ab" style="left:29px;top:790px;width:1066px;height:1px;background:#1b1b1b"></div>
<div class="ab" style="left:29px;top:807px;width:1066px;height:1px;background:#1b1b1b"></div>
<div class="ab" style="left:29px;top:824px;width:1066px;height:1px;background:#1b1b1b"></div>
<div class="ab" style="left:29px;top:841px;width:1066px;height:1px;background:#1b1b1b"></div>
<div class="ab" style="left:29px;top:347px;width:1066px;height:1px;background:#1b1b1b"></div>
<div class="ab" style="left:29px;top:348px;width:1066px;height:1px;background:#8a8a8a"></div>
<div class="ab" style="left:174px;top:328px;width:110px;height:1px;background:#1b1b1b"></div>
<div class="ab" style="left:654px;top:328px;width:110px;height:1px;background:#d4d4d4"></div>
<div class="ab" style="left:764px;top:328px;width:110px;height:1px;background:#d4d4d4"></div>
<div class="ab" style="left:1094px;top:328px;width:26px;height:1px;background:#d4d4d4"></div>
<div class="ab" style="left:1120px;top:328px;width:220px;height:1px;background:#d4d4d4"></div>
<div class="ab" style="left:1094px;top:348px;width:246px;height:1px;background:#b4b4b4"></div>
<div class="ab" style="left:284px;top:275px;width:1px;height:569px;background:#1b1b1b"></div>
<div class="ab" style="left:324px;top:275px;width:1px;height:569px;background:#1b1b1b"></div>
<div class="ab" style="left:434px;top:275px;width:1px;height:569px;background:#1b1b1b"></div>
<div class="ab" style="left:544px;top:275px;width:1px;height:569px;background:#1b1b1b"></div>
<div class="ab" style="left:654px;top:275px;width:1px;height:569px;background:#1b1b1b"></div>
<div class="ab" style="left:764px;top:275px;width:1px;height:569px;background:#1b1b1b"></div>
<div class="ab" style="left:874px;top:275px;width:1px;height:569px;background:#1b1b1b"></div>
<div class="ab" style="left:984px;top:275px;width:1px;height:569px;background:#1b1b1b"></div>
<div class="ab" style="left:1093px;top:275px;width:2px;height:569px;background:#1b1b1b"></div>
<div class="ab" style="left:1119px;top:275px;width:2px;height:73px;background:#1b1b1b"></div>
<div class="ab" style="left:29px;top:275px;width:1px;height:569px;background:#ababab"></div>
<div class="ab" style="left:0;top:328px;width:29px;height:1px;background:#c6c6c6"></div>
<div class="ab" style="left:0;top:348px;width:29px;height:1px;background:#c6c6c6"></div>
<div class="ab" style="left:0;top:365px;width:29px;height:1px;background:#c6c6c6"></div>
<div class="ab" style="left:0;top:382px;width:29px;height:1px;background:#c6c6c6"></div>
<div class="ab" style="left:0;top:399px;width:29px;height:1px;background:#c6c6c6"></div>
<div class="ab" style="left:0;top:416px;width:29px;height:1px;background:#c6c6c6"></div>
<div class="ab" style="left:0;top:433px;width:29px;height:1px;background:#c6c6c6"></div>
<div class="ab" style="left:0;top:450px;width:29px;height:1px;background:#c6c6c6"></div>
<div class="ab" style="left:0;top:467px;width:29px;height:1px;background:#c6c6c6"></div>
<div class="ab" style="left:0;top:484px;width:29px;height:1px;background:#c6c6c6"></div>
<div class="ab" style="left:0;top:501px;width:29px;height:1px;background:#c6c6c6"></div>
<div class="ab" style="left:0;top:518px;width:29px;height:1px;background:#c6c6c6"></div>
<div class="ab" style="left:0;top:535px;width:29px;height:1px;background:#c6c6c6"></div>
<div class="ab" style="left:0;top:552px;width:29px;height:1px;background:#c6c6c6"></div>
<div class="ab" style="left:0;top:569px;width:29px;height:1px;background:#c6c6c6"></div>
<div class="ab" style="left:0;top:586px;width:29px;height:1px;background:#c6c6c6"></div>
<div class="ab" style="left:0;top:603px;width:29px;height:1px;background:#c6c6c6"></div>
<div class="ab" style="left:0;top:620px;width:29px;height:1px;background:#c6c6c6"></div>
<div class="ab" style="left:0;top:637px;width:29px;height:1px;background:#c6c6c6"></div>
<div class="ab" style="left:0;top:654px;width:29px;height:1px;background:#c6c6c6"></div>
<div class="ab" style="left:0;top:671px;width:29px;height:1px;background:#c6c6c6"></div>
<div class="ab" style="left:0;top:688px;width:29px;height:1px;background:#c6c6c6"></div>
<div class="ab" style="left:0;top:705px;width:29px;height:1px;background:#c6c6c6"></div>
<div class="ab" style="left:0;top:722px;width:29px;height:1px;background:#c6c6c6"></div>
<div class="ab" style="left:0;top:739px;width:29px;height:1px;background:#c6c6c6"></div>
<div class="ab" style="left:0;top:756px;width:29px;height:1px;background:#c6c6c6"></div>
<div class="ab" style="left:0;top:773px;width:29px;height:1px;background:#c6c6c6"></div>
<div class="ab" style="left:0;top:790px;width:29px;height:1px;background:#c6c6c6"></div>
<div class="ab" style="left:0;top:807px;width:29px;height:1px;background:#c6c6c6"></div>
<div class="ab" style="left:0;top:824px;width:29px;height:1px;background:#c6c6c6"></div>
<div class="ab" style="left:0;top:841px;width:29px;height:1px;background:#c6c6c6"></div>
<div class="t" style="left:-11px;top:314px;width:47px;text-align:center;font-size:13.5px;color:#222">1</div>
<div class="t" style="left:-11px;top:333px;width:47px;text-align:center;font-size:13.5px;color:#222">2</div>
<div class="t" style="left:-11px;top:350px;width:47px;text-align:center;font-size:13.3px;color:#222;transform:scaleX(0.93)">8907</div>
<div class="t" style="left:-11px;top:367px;width:47px;text-align:center;font-size:13.3px;color:#222;transform:scaleX(0.93)">8908</div>
<div class="t" style="left:-11px;top:384px;width:47px;text-align:center;font-size:13.3px;color:#222;transform:scaleX(0.93)">8909</div>
<div class="t" style="left:-11px;top:401px;width:47px;text-align:center;font-size:13.3px;color:#222;transform:scaleX(0.93)">8910</div>
<div class="t" style="left:-11px;top:418px;width:47px;text-align:center;font-size:13.3px;color:#222;transform:scaleX(0.93)">8911</div>
<div class="t" style="left:-11px;top:435px;width:47px;text-align:center;font-size:13.3px;color:#222;transform:scaleX(0.93)">8912</div>
<div class="t" style="left:-11px;top:452px;width:47px;text-align:center;font-size:13.3px;color:#222;transform:scaleX(0.93)">8913</div>
<div class="t" style="left:-11px;top:469px;width:47px;text-align:center;font-size:13.3px;color:#222;transform:scaleX(0.93)">8914</div>
<div class="t" style="left:-11px;top:486px;width:47px;text-align:center;font-size:13.3px;color:#222;transform:scaleX(0.93)">8915</div>
<div class="t" style="left:-11px;top:503px;width:47px;text-align:center;font-size:13.3px;color:#222;transform:scaleX(0.93)">8916</div>
<div class="t" style="left:-11px;top:520px;width:47px;text-align:center;font-size:13.3px;color:#222;transform:scaleX(0.93)">8917</div>
<div class="t" style="left:-11px;top:537px;width:47px;text-align:center;font-size:13.3px;color:#222;transform:scaleX(0.93)">8918</div>
<div class="t" style="left:-11px;top:554px;width:47px;text-align:center;font-size:13.3px;color:#222;transform:scaleX(0.93)">8919</div>
<div class="t" style="left:-11px;top:571px;width:47px;text-align:center;font-size:13.3px;color:#222;transform:scaleX(0.93)">8920</div>
<div class="t" style="left:-11px;top:588px;width:47px;text-align:center;font-size:13.3px;color:#222;transform:scaleX(0.93)">8921</div>
<div class="t" style="left:-11px;top:605px;width:47px;text-align:center;font-size:13.3px;color:#222;transform:scaleX(0.93)">8922</div>
<div class="t" style="left:-11px;top:622px;width:47px;text-align:center;font-size:13.3px;color:#222;transform:scaleX(0.93)">8923</div>
<div class="t" style="left:-11px;top:639px;width:47px;text-align:center;font-size:13.3px;color:#222;transform:scaleX(0.93)">8924</div>
<div class="t" style="left:-11px;top:656px;width:47px;text-align:center;font-size:13.3px;color:#222;transform:scaleX(0.93)">8925</div>
<div class="t" style="left:-11px;top:673px;width:47px;text-align:center;font-size:13.3px;color:#222;transform:scaleX(0.93)">8926</div>
<div class="t" style="left:-11px;top:690px;width:47px;text-align:center;font-size:13.3px;color:#222;transform:scaleX(0.93)">8927</div>
<div class="t" style="left:-11px;top:707px;width:47px;text-align:center;font-size:13.3px;color:#222;transform:scaleX(0.93)">8928</div>
<div class="t" style="left:-11px;top:724px;width:47px;text-align:center;font-size:13.3px;color:#222;transform:scaleX(0.93)">8929</div>
<div class="t" style="left:-11px;top:741px;width:47px;text-align:center;font-size:13.3px;color:#222;transform:scaleX(0.93)">8930</div>
<div class="t" style="left:-11px;top:758px;width:47px;text-align:center;font-size:13.3px;color:#222;transform:scaleX(0.93)">8931</div>
<div class="t" style="left:-11px;top:775px;width:47px;text-align:center;font-size:13.3px;color:#222;transform:scaleX(0.93)">8932</div>
<div class="t" style="left:-11px;top:792px;width:47px;text-align:center;font-size:13.3px;color:#222;transform:scaleX(0.93)">8933</div>
<div class="t" style="left:-11px;top:809px;width:47px;text-align:center;font-size:13.3px;color:#222;transform:scaleX(0.93)">8934</div>
<div class="t" style="left:-11px;top:826px;width:47px;text-align:center;font-size:13.3px;color:#222;transform:scaleX(0.93)">8935</div>
<div class="t" style="left:32px;top:351px;font-size:13.33px;transform:scaleX(0.965);transform-origin:0 0">31/03/2019 23:00:00</div>
<div class="t" style="left:174px;top:351px;width:110px;text-align:center;font-size:13.33px;transform:scaleX(0.965);">6,903</div>
<div class="t" style="left:324px;top:351px;width:110px;text-align:center;font-size:13.33px;transform:scaleX(0.965);">6,903</div>
<div class="t" style="left:874px;top:351px;width:110px;text-align:center;font-size:13.33px;transform:scaleX(0.965);">6,903</div>
<div class="t" style="left:1123px;top:351px;font-size:13.33px;transform:scaleX(0.965);transform-origin:0 0">OK</div>
<div class="t" style="left:1230px;top:351px;width:108px;text-align:right;font-size:13.33px;transform:scaleX(0.965);transform-origin:100% 0">0</div>
<div class="t" style="left:32px;top:368px;font-size:13.33px;transform:scaleX(0.965);transform-origin:0 0">31/03/2019 23:05:00</div>
<div class="t" style="left:174px;top:368px;width:110px;text-align:center;font-size:13.33px;transform:scaleX(0.965);">7,089</div>
<div class="t" style="left:324px;top:368px;width:110px;text-align:center;font-size:13.33px;transform:scaleX(0.965);">7,089</div>
<div class="t" style="left:874px;top:368px;width:110px;text-align:center;font-size:13.33px;transform:scaleX(0.965);">7,089</div>
<div class="t" style="left:1123px;top:368px;font-size:13.33px;transform:scaleX(0.965);transform-origin:0 0">OK</div>
<div class="t" style="left:1230px;top:368px;width:108px;text-align:right;font-size:13.33px;transform:scaleX(0.965);transform-origin:100% 0">0</div>
<div class="t" style="left:32px;top:385px;font-size:13.33px;transform:scaleX(0.965);transform-origin:0 0">31/03/2019 23:10:00</div>
<div class="t" style="left:174px;top:385px;width:110px;text-align:center;font-size:13.33px;transform:scaleX(0.965);">6,717</div>
<div class="t" style="left:324px;top:385px;width:110px;text-align:center;font-size:13.33px;transform:scaleX(0.965);">6,717</div>
<div class="t" style="left:874px;top:385px;width:110px;text-align:center;font-size:13.33px;transform:scaleX(0.965);">6,717</div>
<div class="t" style="left:1123px;top:385px;font-size:13.33px;transform:scaleX(0.965);transform-origin:0 0">OK</div>
<div class="t" style="left:1230px;top:385px;width:108px;text-align:right;font-size:13.33px;transform:scaleX(0.965);transform-origin:100% 0">0</div>
<div class="t" style="left:32px;top:402px;font-size:13.33px;transform:scaleX(0.965);transform-origin:0 0">31/03/2019 23:15:00</div>
<div class="t" style="left:174px;top:402px;width:110px;text-align:center;font-size:13.33px;transform:scaleX(0.965);">6,781</div>
<div class="t" style="left:324px;top:402px;width:110px;text-align:center;font-size:13.33px;transform:scaleX(0.965);">6,781</div>
<div class="t" style="left:874px;top:402px;width:110px;text-align:center;font-size:13.33px;transform:scaleX(0.965);">6,781</div>
<div class="t" style="left:1123px;top:402px;font-size:13.33px;transform:scaleX(0.965);transform-origin:0 0">OK</div>
<div class="t" style="left:1230px;top:402px;width:108px;text-align:right;font-size:13.33px;transform:scaleX(0.965);transform-origin:100% 0">0</div>
<div class="t" style="left:32px;top:419px;font-size:13.33px;transform:scaleX(0.965);transform-origin:0 0">31/03/2019 23:20:00</div>
<div class="t" style="left:174px;top:419px;width:110px;text-align:center;font-size:13.33px;transform:scaleX(0.965);">6,658</div>
<div class="t" style="left:324px;top:419px;width:110px;text-align:center;font-size:13.33px;transform:scaleX(0.965);">6,658</div>
<div class="t" style="left:874px;top:419px;width:110px;text-align:center;font-size:13.33px;transform:scaleX(0.965);">6,658</div>
<div class="t" style="left:1123px;top:419px;font-size:13.33px;transform:scaleX(0.965);transform-origin:0 0">OK</div>
<div class="t" style="left:1230px;top:419px;width:108px;text-align:right;font-size:13.33px;transform:scaleX(0.965);transform-origin:100% 0">0</div>
<div class="t" style="left:32px;top:436px;font-size:13.33px;transform:scaleX(0.965);transform-origin:0 0">31/03/2019 23:25:00</div>
<div class="t" style="left:174px;top:436px;width:110px;text-align:center;font-size:13.33px;transform:scaleX(0.965);">7,089</div>
<div class="t" style="left:324px;top:436px;width:110px;text-align:center;font-size:13.33px;transform:scaleX(0.965);">7,089</div>
<div class="t" style="left:874px;top:436px;width:110px;text-align:center;font-size:13.33px;transform:scaleX(0.965);">7,089</div>
<div class="t" style="left:1123px;top:436px;font-size:13.33px;transform:scaleX(0.965);transform-origin:0 0">OK</div>
<div class="t" style="left:1230px;top:436px;width:108px;text-align:right;font-size:13.33px;transform:scaleX(0.965);transform-origin:100% 0">0</div>
<div class="t" style="left:32px;top:453px;font-size:13.33px;transform:scaleX(0.965);transform-origin:0 0">31/03/2019 23:30:00</div>
<div class="t" style="left:174px;top:453px;width:110px;text-align:center;font-size:13.33px;transform:scaleX(0.965);">6,964</div>
<div class="t" style="left:324px;top:453px;width:110px;text-align:center;font-size:13.33px;transform:scaleX(0.965);">6,964</div>
<div class="t" style="left:874px;top:453px;width:110px;text-align:center;font-size:13.33px;transform:scaleX(0.965);">6,964</div>
<div class="t" style="left:1123px;top:453px;font-size:13.33px;transform:scaleX(0.965);transform-origin:0 0">OK</div>
<div class="t" style="left:1230px;top:453px;width:108px;text-align:right;font-size:13.33px;transform:scaleX(0.965);transform-origin:100% 0">0</div>
<div class="t" style="left:32px;top:470px;font-size:13.33px;transform:scaleX(0.965);transform-origin:0 0">31/03/2019 23:35:00</div>
<div class="t" style="left:174px;top:470px;width:110px;text-align:center;font-size:13.33px;transform:scaleX(0.965);">6,903</div>
<div class="t" style="left:324px;top:470px;width:110px;text-align:center;font-size:13.33px;transform:scaleX(0.965);">6,903</div>
<div class="t" style="left:874px;top:470px;width:110px;text-align:center;font-size:13.33px;transform:scaleX(0.965);">6,903</div>
<div class="t" style="left:1123px;top:470px;font-size:13.33px;transform:scaleX(0.965);transform-origin:0 0">OK</div>
<div class="t" style="left:1230px;top:470px;width:108px;text-align:right;font-size:13.33px;transform:scaleX(0.965);transform-origin:100% 0">0</div>
<div class="t" style="left:32px;top:487px;font-size:13.33px;transform:scaleX(0.965);transform-origin:0 0">31/03/2019 23:40:00</div>
<div class="t" style="left:174px;top:487px;width:110px;text-align:center;font-size:13.33px;transform:scaleX(0.965);">6,749</div>
<div class="t" style="left:324px;top:487px;width:110px;text-align:center;font-size:13.33px;transform:scaleX(0.965);">6,749</div>
<div class="t" style="left:874px;top:487px;width:110px;text-align:center;font-size:13.33px;transform:scaleX(0.965);">6,749</div>
<div class="t" style="left:1123px;top:487px;font-size:13.33px;transform:scaleX(0.965);transform-origin:0 0">OK</div>
<div class="t" style="left:1230px;top:487px;width:108px;text-align:right;font-size:13.33px;transform:scaleX(0.965);transform-origin:100% 0">0</div>
<div class="t" style="left:32px;top:504px;font-size:13.33px;transform:scaleX(0.965);transform-origin:0 0">31/03/2019 23:45:00</div>
<div class="t" style="left:174px;top:504px;width:110px;text-align:center;font-size:13.33px;transform:scaleX(0.965);">7,089</div>
<div class="t" style="left:324px;top:504px;width:110px;text-align:center;font-size:13.33px;transform:scaleX(0.965);">7,089</div>
<div class="t" style="left:874px;top:504px;width:110px;text-align:center;font-size:13.33px;transform:scaleX(0.965);">7,089</div>
<div class="t" style="left:1123px;top:504px;font-size:13.33px;transform:scaleX(0.965);transform-origin:0 0">OK</div>
<div class="t" style="left:1230px;top:504px;width:108px;text-align:right;font-size:13.33px;transform:scaleX(0.965);transform-origin:100% 0">0</div>
<div class="t" style="left:32px;top:521px;font-size:13.33px;transform:scaleX(0.965);transform-origin:0 0">31/03/2019 23:50:00</div>
<div class="t" style="left:174px;top:521px;width:110px;text-align:center;font-size:13.33px;transform:scaleX(0.965);">6,781</div>
<div class="t" style="left:324px;top:521px;width:110px;text-align:center;font-size:13.33px;transform:scaleX(0.965);">6,781</div>
<div class="t" style="left:874px;top:521px;width:110px;text-align:center;font-size:13.33px;transform:scaleX(0.965);">6,781</div>
<div class="t" style="left:1123px;top:521px;font-size:13.33px;transform:scaleX(0.965);transform-origin:0 0">OK</div>
<div class="t" style="left:1230px;top:521px;width:108px;text-align:right;font-size:13.33px;transform:scaleX(0.965);transform-origin:100% 0">0</div>
<div class="t" style="left:32px;top:538px;font-size:13.33px;transform:scaleX(0.965);transform-origin:0 0">31/03/2019 23:55:00</div>
<div class="t" style="left:174px;top:538px;width:110px;text-align:center;font-size:13.33px;transform:scaleX(0.965);">6,656</div>
<div class="t" style="left:324px;top:538px;width:110px;text-align:center;font-size:13.33px;transform:scaleX(0.965);">6,656</div>
<div class="t" style="left:874px;top:538px;width:110px;text-align:center;font-size:13.33px;transform:scaleX(0.965);">6,656</div>
<div class="t" style="left:1123px;top:538px;font-size:13.33px;transform:scaleX(0.965);transform-origin:0 0">OK</div>
<div class="t" style="left:1230px;top:538px;width:108px;text-align:right;font-size:13.33px;transform:scaleX(0.965);transform-origin:100% 0">0</div>
<div class="t" style="left:1120px;top:555px;width:110px;text-align:center;font-size:13.33px;transform:scaleX(0.965);">#VALEUR!</div>
<div class="t" style="left:1230px;top:555px;width:108px;text-align:right;font-size:13.33px;transform:scaleX(0.965);transform-origin:100% 0">0</div>
<div class="t" style="left:1120px;top:572px;width:110px;text-align:center;font-size:13.33px;transform:scaleX(0.965);">#VALEUR!</div>
<div class="t" style="left:1230px;top:572px;width:108px;text-align:right;font-size:13.33px;transform:scaleX(0.965);transform-origin:100% 0">0</div>
<div class="t" style="left:1120px;top:589px;width:110px;text-align:center;font-size:13.33px;transform:scaleX(0.965);">#VALEUR!</div>
<div class="t" style="left:1230px;top:589px;width:108px;text-align:right;font-size:13.33px;transform:scaleX(0.965);transform-origin:100% 0">0</div>
<div class="t" style="left:1120px;top:606px;width:110px;text-align:center;font-size:13.33px;transform:scaleX(0.965);">#VALEUR!</div>
<div class="t" style="left:1230px;top:606px;width:108px;text-align:right;font-size:13.33px;transform:scaleX(0.965);transform-origin:100% 0">0</div>
<div class="t" style="left:1120px;top:623px;width:110px;text-align:center;font-size:13.33px;transform:scaleX(0.965);">#VALEUR!</div>
<div class="t" style="left:1230px;top:623px;width:108px;text-align:right;font-size:13.33px;transform:scaleX(0.965);transform-origin:100% 0">0</div>
<div class="t" style="left:1120px;top:640px;width:110px;text-align:center;font-size:13.33px;transform:scaleX(0.965);">#VALEUR!</div>
<div class="t" style="left:1230px;top:640px;width:108px;text-align:right;font-size:13.33px;transform:scaleX(0.965);transform-origin:100% 0">0</div>
<div class="t" style="left:1120px;top:657px;width:110px;text-align:center;font-size:13.33px;transform:scaleX(0.965);">#VALEUR!</div>
<div class="t" style="left:1230px;top:657px;width:108px;text-align:right;font-size:13.33px;transform:scaleX(0.965);transform-origin:100% 0">0</div>
<div class="t" style="left:1120px;top:674px;width:110px;text-align:center;font-size:13.33px;transform:scaleX(0.965);">#VALEUR!</div>
<div class="t" style="left:1230px;top:674px;width:108px;text-align:right;font-size:13.33px;transform:scaleX(0.965);transform-origin:100% 0">0</div>
<div class="t" style="left:1120px;top:691px;width:110px;text-align:center;font-size:13.33px;transform:scaleX(0.965);">#VALEUR!</div>
<div class="t" style="left:1230px;top:691px;width:108px;text-align:right;font-size:13.33px;transform:scaleX(0.965);transform-origin:100% 0">0</div>
<div class="t" style="left:1120px;top:708px;width:110px;text-align:center;font-size:13.33px;transform:scaleX(0.965);">#VALEUR!</div>
<div class="t" style="left:1230px;top:708px;width:108px;text-align:right;font-size:13.33px;transform:scaleX(0.965);transform-origin:100% 0">0</div>
<div class="t" style="left:1120px;top:725px;width:110px;text-align:center;font-size:13.33px;transform:scaleX(0.965);">#VALEUR!</div>
<div class="t" style="left:1230px;top:725px;width:108px;text-align:right;font-size:13.33px;transform:scaleX(0.965);transform-origin:100% 0">0</div>
<div class="t" style="left:1120px;top:742px;width:110px;text-align:center;font-size:13.33px;transform:scaleX(0.965);">#VALEUR!</div>
<div class="t" style="left:1230px;top:742px;width:108px;text-align:right;font-size:13.33px;transform:scaleX(0.965);transform-origin:100% 0">0</div>
<div class="t" style="left:1120px;top:759px;width:110px;text-align:center;font-size:13.33px;transform:scaleX(0.965);">#VALEUR!</div>
<div class="t" style="left:1230px;top:759px;width:108px;text-align:right;font-size:13.33px;transform:scaleX(0.965);transform-origin:100% 0">0</div>
<div class="t" style="left:1120px;top:776px;width:110px;text-align:center;font-size:13.33px;transform:scaleX(0.965);">#VALEUR!</div>
<div class="t" style="left:1230px;top:776px;width:108px;text-align:right;font-size:13.33px;transform:scaleX(0.965);transform-origin:100% 0">0</div>
<div class="t" style="left:1120px;top:793px;width:110px;text-align:center;font-size:13.33px;transform:scaleX(0.965);">#VALEUR!</div>
<div class="t" style="left:1230px;top:793px;width:108px;text-align:right;font-size:13.33px;transform:scaleX(0.965);transform-origin:100% 0">0</div>
<div class="t" style="left:1120px;top:810px;width:110px;text-align:center;font-size:13.33px;transform:scaleX(0.965);">#VALEUR!</div>
<div class="t" style="left:1230px;top:810px;width:108px;text-align:right;font-size:13.33px;transform:scaleX(0.965);transform-origin:100% 0">0</div>
<div class="t" style="left:1120px;top:827px;width:110px;text-align:center;font-size:13.33px;transform:scaleX(0.965);">#VALEUR!</div>
<div class="t" style="left:1230px;top:827px;width:108px;text-align:right;font-size:13.33px;transform:scaleX(0.965);transform-origin:100% 0">0</div>
<div class="t" style="left:29px;top:305px;width:145px;text-align:center;font-size:13.33px;color:#000;font-weight:normal;transform:scaleX(0.955);">DATE</div>
<div class="t" style="left:174px;top:287px;width:110px;text-align:center;font-size:13.33px;color:#000;font-weight:normal;transform:scaleX(0.955);">Hauteur 5 min</div>
<div class="t" style="left:174px;top:304px;width:110px;text-align:center;font-size:13.33px;color:#000;font-weight:normal;transform:scaleX(0.955);">brute</div>
<div class="t" style="left:284px;top:280px;width:40px;text-align:center;font-size:13.33px;color:#000;font-weight:normal;transform:scaleX(0.955);">Ind.</div>
<div class="t" style="left:284px;top:297px;width:40px;text-align:center;font-size:13.33px;color:#000;font-weight:normal;transform:scaleX(0.955);">de</div>
<div class="t" style="left:284px;top:314px;width:40px;text-align:center;font-size:13.33px;color:#000;font-weight:normal;transform:scaleX(0.955);">Validi</div>
<div class="t" style="left:284px;top:331px;width:40px;text-align:center;font-size:13.33px;color:#000;font-weight:normal;transform:scaleX(0.955);">té</div>
<div class="t" style="left:324px;top:287px;width:110px;text-align:center;font-size:13.33px;color:#000;font-weight:bold;">Hauteur validée</div>
<div class="t" style="left:324px;top:304px;width:110px;text-align:center;font-size:13.33px;color:#000;font-weight:bold;">automatiqueme</div>
<div class="t" style="left:324px;top:321px;width:110px;text-align:center;font-size:13.33px;color:#000;font-weight:bold;">nt</div>
<div class="t" style="left:434px;top:287px;width:110px;text-align:center;font-size:13.33px;color:#000;font-weight:bold;">Hauteur validée</div>
<div class="t" style="left:434px;top:304px;width:110px;text-align:center;font-size:13.33px;color:#000;font-weight:bold;">manuellement</div>
<div class="t" style="left:434px;top:332px;width:110px;text-align:center;font-size:13.33px;color:#000;font-weight:bold;">V</div>
<div class="t" style="left:544px;top:287px;width:110px;text-align:center;font-size:13.33px;color:#000;font-weight:bold;">Hauteur</div>
<div class="t" style="left:544px;top:304px;width:110px;text-align:center;font-size:13.33px;color:#000;font-weight:bold;">corrigée</div>
<div class="t" style="left:544px;top:332px;width:110px;text-align:center;font-size:13.33px;color:#000;font-weight:bold;">C</div>
<div class="t" style="left:654px;top:287px;width:110px;text-align:center;font-size:13.33px;color:#000;font-weight:normal;transform:scaleX(0.955);">Hauteur Invalidée</div>
<div class="t" style="left:654px;top:304px;width:110px;text-align:center;font-size:13.33px;color:#000;font-weight:normal;transform:scaleX(0.955);">automatiquement</div>
<div class="t" style="left:764px;top:287px;width:110px;text-align:center;font-size:13.33px;color:#000;font-weight:normal;transform:scaleX(0.955);">Hauteur invalidée</div>
<div class="t" style="left:764px;top:304px;width:110px;text-align:center;font-size:13.33px;color:#000;font-weight:normal;transform:scaleX(0.955);">manuellement</div>
<div class="t" style="left:654px;top:332px;width:110px;text-align:center;font-size:13.33px;color:#000;font-weight:normal;transform:scaleX(0.955);">IA</div>
<div class="t" style="left:764px;top:332px;width:110px;text-align:center;font-size:13.33px;color:#000;font-weight:normal;transform:scaleX(0.955);">IU</div>
<div class="t" style="left:874px;top:305px;width:110px;text-align:center;font-size:13.33px;color:#000;font-weight:normal;transform:scaleX(0.955);">Hauteur Valide</div>
<div class="t" style="left:984px;top:288px;width:110px;text-align:center;font-size:13.33px;color:#300000;font-weight:bold;">Hauteur</div>
<div class="t" style="left:984px;top:305px;width:110px;text-align:center;font-size:13.33px;color:#300000;font-weight:bold;">invalidée non</div>
<div class="t" style="left:984px;top:322px;width:110px;text-align:center;font-size:13.33px;color:#300000;font-weight:bold;">reconstruite</div>
<div class="ab" style="left:1121px;top:279px;width:219px;text-align:center;font-size:11px;line-height:15px;white-space:normal">Nombre de données manquantes&nbsp; à la<br>réception dans Aquacalc; par rapport à la<br>fréquence minimale d'enregistrement</div>
<div class="t" style="left:1230px;top:333px;width:110px;text-align:center;font-size:13.33px">12</div>
<div class="ab" style="left:175px;top:329px;width:109px;height:18px;overflow:hidden"><div class="ab" style="left:0;top:-5px;width:109px;text-align:center;font-size:11px;line-height:15.5px;color:#222">(M) H TP Collecter*<br>4min SYAGE</div></div>
<div class="ab" style="left:157px;top:330px;width:17px;height:17px;background:#fff;border:1px solid #d0d0d0"><svg class="ab" style="left:4px;top:6px" width="8" height="5"><path d="M0 0 L8 0 L4 4 Z" fill="#555"/></svg></div>
<div class="ab" style="left:267px;top:330px;width:17px;height:17px;background:#fff;border:1px solid #d0d0d0"><svg class="ab" style="left:4px;top:6px" width="8" height="5"><path d="M0 0 L8 0 L4 4 Z" fill="#555"/></svg></div>
<div class="ab" style="left:306px;top:330px;width:17px;height:17px;background:#fff;border:1px solid #d0d0d0"><svg class="ab" style="left:4px;top:6px" width="8" height="5"><path d="M0 0 L8 0 L4 4 Z" fill="#555"/></svg></div>
<div class="ab" style="left:417px;top:330px;width:17px;height:17px;background:#fff;border:1px solid #d0d0d0"><svg class="ab" style="left:4px;top:6px" width="8" height="5"><path d="M0 0 L8 0 L4 4 Z" fill="#555"/></svg></div>
<div class="ab" style="left:527px;top:330px;width:17px;height:17px;background:#fff;border:1px solid #d0d0d0"><svg class="ab" style="left:4px;top:6px" width="8" height="5"><path d="M0 0 L8 0 L4 4 Z" fill="#555"/></svg></div>
<div class="ab" style="left:637px;top:330px;width:17px;height:17px;background:#fff;border:1px solid #d0d0d0"><svg class="ab" style="left:4px;top:6px" width="8" height="5"><path d="M0 0 L8 0 L4 4 Z" fill="#555"/></svg></div>
<div class="ab" style="left:747px;top:330px;width:17px;height:17px;background:#fff;border:1px solid #d0d0d0"><svg class="ab" style="left:4px;top:6px" width="8" height="5"><path d="M0 0 L8 0 L4 4 Z" fill="#555"/></svg></div>
<div class="ab" style="left:857px;top:330px;width:17px;height:17px;background:#fff;border:1px solid #d0d0d0"><svg class="ab" style="left:4px;top:6px" width="8" height="5"><path d="M0 0 L8 0 L4 4 Z" fill="#555"/></svg></div>
<div class="ab" style="left:967px;top:330px;width:17px;height:17px;background:#fff;border:1px solid #d0d0d0"><svg class="ab" style="left:4px;top:6px" width="8" height="5"><path d="M0 0 L8 0 L4 4 Z" fill="#555"/></svg></div>
<div class="ab" style="left:1077px;top:330px;width:17px;height:17px;background:#fff;border:1px solid #d0d0d0"><svg class="ab" style="left:4px;top:6px" width="8" height="5"><path d="M0 0 L8 0 L4 4 Z" fill="#555"/></svg></div>
<div class="ab" style="left:1102px;top:330px;width:17px;height:17px;background:#fff;border:1px solid #d0d0d0"><svg class="ab" style="left:4px;top:6px" width="8" height="5"><path d="M0 0 L8 0 L4 4 Z" fill="#555"/></svg></div>
<div class="ab" style="left:1212px;top:330px;width:17px;height:17px;background:#fff;border:1px solid #d0d0d0"><svg class="ab" style="left:4px;top:6px" width="8" height="5"><path d="M0 0 L8 0 L4 4 Z" fill="#555"/></svg></div>
<div class="ab" style="left:1323px;top:330px;width:17px;height:17px;background:#fff;border:1px solid #d0d0d0"><svg class="ab" style="left:4px;top:6px" width="8" height="5"><path d="M0 0 L8 0 L4 4 Z" fill="#555"/></svg></div>
<div class="ab" style="left:0;top:844px;width:1597px;height:28px;background:#e6e6e6"></div>
<div class="ab" style="left:0;top:844px;width:1577px;height:1px;background:#a9a9a9"></div>
<div class="ab" style="left:0;top:872px;width:1597px;height:21px;background:#f3f3f3;border-top:1px solid #d0d0d0"></div>
<div class="ab" style="left:0;top:893px;width:1597px;height:2px;background:#217346"></div>
<svg class="ab" style="left:22px;top:852px" width="50" height="14"><path d="M6 2 L1.5 6.5 L6 11 Z" fill="#1e6b41"/><path d="M30 2.5 L34 6.5 L30 10.5 Z" fill="#c8c8c8"/></svg>
<svg class="ab" style="left:77px;top:860px" width="14" height="4"><rect x="0" y="0" width="2.5" height="2.5" fill="#333"/><rect x="4.5" y="0" width="2.5" height="2.5" fill="#333"/><rect x="9" y="0" width="2.5" height="2.5" fill="#333"/></svg>
<div class="ab" style="left:97px;top:849px;width:1px;height:20px;background:#b4b4b4"></div>
<div class="ab" style="left:99px;top:847px;width:119px;height:25px;background:#d4f08c"></div>
<div class="t" style="left:99px;top:852px;width:119px;text-align:center;font-size:12.5px;color:#222">Données_Pluvio</div>
<div class="ab" style="left:219px;top:844px;width:94px;height:25px;background:linear-gradient(#ffffff,#f7f9f7);border-bottom:3px solid #2b5d3f;border-left:1px solid #b4b4b4;border-right:1px solid #b4b4b4"></div>
<div class="t" style="left:219px;top:852px;width:94px;text-align:center;font-size:12.5px;font-weight:bold;color:#2a5e40">Données_H</div>
<div class="ab" style="left:313px;top:847px;width:90px;height:25px;background:#d4f08c"></div>
<div class="t" style="left:313px;top:852px;width:90px;text-align:center;font-size:12.5px;color:#222">Données_V</div>
<div class="ab" style="left:406px;top:847px;width:90px;height:25px;background:#d4f08c"></div>
<div class="t" style="left:406px;top:852px;width:90px;text-align:center;font-size:12.5px;color:#222">Données_Q</div>
<div class="ab" style="left:499px;top:847px;width:93px;height:25px;background:#fafa9e"></div>
<div class="t" style="left:499px;top:852px;width:93px;text-align:center;font-size:12.5px;color:#222">Statistiques</div>
<div class="ab" style="left:596px;top:847px;width:104px;height:22px;background:#17aeea"></div>
<div class="t" style="left:596px;top:852px;width:104px;text-align:center;font-size:12.5px;color:#1d3b5a">Graphs_H V Q</div>
<div class="t" style="left:705px;top:852px;width:85px;text-align:center;font-size:12.5px;color:#444">Comments</div>
<div class="t" style="left:795px;top:852px;width:85px;text-align:center;font-size:12.5px;color:#444">D1H Utiles</div>
<div class="t" style="left:885px;top:852px;width:47px;text-align:center;font-size:12.5px;color:#444">Q1H</div>
<div class="ab" style="left:404px;top:849px;width:1px;height:20px;background:#b4b4b4"></div>
<div class="ab" style="left:497px;top:849px;width:1px;height:20px;background:#b4b4b4"></div>
<div class="ab" style="left:594px;top:849px;width:1px;height:20px;background:#b4b4b4"></div>
<div class="ab" style="left:703px;top:849px;width:1px;height:20px;background:#b4b4b4"></div>
<div class="ab" style="left:792px;top:849px;width:1px;height:20px;background:#b4b4b4"></div>
<div class="ab" style="left:882px;top:849px;width:1px;height:20px;background:#b4b4b4"></div>
<div class="ab" style="left:932px;top:849px;width:1px;height:20px;background:#b4b4b4"></div>
<svg class="ab" style="left:964px;top:849px" width="18" height="18"><circle cx="9" cy="9" r="7" fill="none" stroke="#c8c8c8" stroke-width="1.3"/><path d="M9 5 V13 M5 9 H13" stroke="#c8c8c8" stroke-width="1.5"/></svg>
<svg class="ab" style="left:1183px;top:852px" width="4" height="14"><rect x="0.5" y="1" width="2" height="2" fill="#9a9a9a"/><rect x="0.5" y="5.5" width="2" height="2" fill="#9a9a9a"/><rect x="0.5" y="10" width="2" height="2" fill="#9a9a9a"/></svg>
<div class="ab" style="left:1201px;top:851px;width:375px;height:15px;background:#dadada;border:1px solid #c6c6c6"></div>
<div class="ab" style="left:1201px;top:851px;width:15px;height:15px;background:#fff;border:1px solid #bdbdbd"></div>
<svg class="ab" style="left:1205px;top:854px" width="8" height="9"><path d="M6 0.5 L1.5 4.5 L6 8.5 Z" fill="#505050"/></svg>
<div class="ab" style="left:1216px;top:851px;width:318px;height:15px;background:#fff;border:1px solid #b0b0b0;border-left:2px solid #8a8a8a"></div>
<div class="ab" style="left:1561px;top:851px;width:15px;height:15px;background:#fff;border:1px solid #bdbdbd"></div>
<svg class="ab" style="left:1565px;top:854px" width="8" height="9"><path d="M2 0.5 L6.5 4.5 L2 8.5 Z" fill="#505050"/></svg>
<div class="ab" style="left:1576px;top:256px;width:21px;height:589px;background:#e6e6e6"></div>
<div class="ab" style="left:1577px;top:277px;width:17px;height:552px;background:#dadada"></div>
<div class="ab" style="left:1575px;top:275px;width:1px;height:569px;background:#9e9e9e"></div>
<div class="ab" style="left:1579px;top:261px;width:15px;height:15px;background:#fff;border:1px solid #9e9e9e"></div>
<svg class="ab" style="left:1582px;top:265px" width="10" height="7"><path d="M0.5 5.5 L4.5 1 L8.5 5.5 Z" fill="#505050"/></svg>
<div class="ab" style="left:1579px;top:515px;width:15px;height:17px;background:#fff;border:1px solid #8e8e8e"></div>
<div class="ab" style="left:1579px;top:829px;width:15px;height:15px;background:#fff;border:1px solid #c6c6c6"></div>
<svg class="ab" style="left:1582px;top:834px" width="10" height="7"><path d="M0.5 1 L4.5 5.5 L8.5 1 Z" fill="#505050"/></svg>
<div class="t" style="left:6px;top:877px;font-size:11.7px;color:#5e5e5e;">Modifier</div>
<svg class="ab" style="left:67px;top:875px" width="16" height="14"><circle cx="3" cy="3" r="2.6" fill="#555"/><rect x="5" y="1" width="9" height="3" fill="#555"/><rect x="1.5" y="5.5" width="12" height="7.5" fill="none" stroke="#555"/><path d="M3 8 H12 M3 10.5 H12" stroke="#555" stroke-dasharray="2 1"/></svg>
<svg class="ab" style="left:1312px;top:875px" width="240" height="16">
<g fill="none" stroke="#555"><rect x="2.5" y="1.5" width="12" height="12"/><path d="M6.5 1.5 V13.5 M10.5 1.5 V13.5 M2.5 5.5 H14.5 M2.5 9.5 H14.5"/></g>
<g fill="none" stroke="#555"><rect x="40.5" y="1.5" width="13" height="12"/><rect x="43.5" y="3.5" width="7" height="8"/><path d="M45 5.5 H49 M45 7.5 H49 M45 9.5 H49"/></g>
<g fill="none" stroke="#555"><rect x="77.5" y="1.5" width="13" height="12"/><path d="M81.5 1.5 V7.5 H85.5 V1.5"/></g>
<path d="M108 8.5 H115" stroke="#888" stroke-width="1.5"/>
<path d="M119 8.5 H219 M169 6 V11" stroke="#999" stroke-width="1"/>
<path d="M224 8.5 H231 M227.5 5 V12" stroke="#888" stroke-width="1.5"/>
</svg>
<div class="t" style="left:1560px;top:877px;font-size:11px;color:#a8a8a8;">100 %</div>
</body></html>
